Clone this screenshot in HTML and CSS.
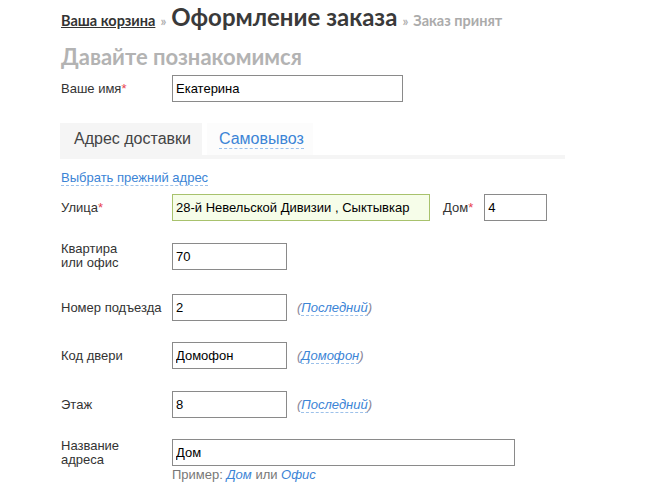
FILE: index.html
```html
<!DOCTYPE html>
<html lang="ru">
<head>
<meta charset="utf-8">
<title>Оформление заказа</title>
<link rel="stylesheet" href="styles.css">
</head>
<body>
<div class="page">
  <div class="crumbs">
    <a class="crumb-link" href="#">Ваша корзина</a>
    <span class="sep">»</span>
    <h1 class="title">Оформление заказа</h1>
    <span class="sep">»</span>
    <span class="crumb-next">Заказ принят</span>
  </div>

  <h2 class="section">Давайте познакомимся</h2>

  <div class="row row-name">
    <label class="label">Ваше имя<span class="req">*</span></label>
    <input class="field w-name" type="text" value="Екатерина">
  </div>

  <div class="tabs">
    <div class="tab tab-active">Адрес доставки</div>
    <div class="tab tab-other"><span class="dash-link">Самовывоз</span></div>
  </div>

  <div class="prev"><span class="dash-link">Выбрать прежний адрес</span></div>

  <div class="rows">
    <div class="row">
      <label class="label">Улица<span class="req">*</span></label>
      <input class="field field-ok w-street" type="text" value="28-й Невельской Дивизии , Сыктывкар">
      <label class="label-inline">Дом<span class="req">*</span></label>
      <input class="field w-house" type="text" value="4">
    </div>
    <div class="row row-flat">
      <label class="label label-two">Квартира<br>или офис</label>
      <input class="field w-small" type="text" value="70">
    </div>
    <div class="row">
      <label class="label">Номер подъезда</label>
      <input class="field w-small" type="text" value="2">
      <span class="hint">(<span class="dash-link">Последний</span>)</span>
    </div>
    <div class="row row-door">
      <label class="label">Код двери</label>
      <input class="field w-small" type="text" value="Домофон">
      <span class="hint">(<span class="dash-link">Домофон</span>)</span>
    </div>
    <div class="row">
      <label class="label">Этаж</label>
      <input class="field w-small" type="text" value="8">
      <span class="hint">(<span class="dash-link">Последний</span>)</span>
    </div>
    <div class="row row-top">
      <label class="label label-two">Название<br>адреса</label>
      <div class="field-col">
        <input class="field w-wide" type="text" value="Дом">
        <div class="example">Пример: <span class="dash-link ex-link">Дом</span> или <span class="dash-link ex-link">Офис</span></div>
      </div>
    </div>
  </div>
</div>
</body>
</html>
```

FILE: styles.css
```css
html, body {
  margin: 0;
  padding: 0;
  background: #ffffff;
}

body {
  font-family: "Liberation Sans", Arial, sans-serif;
  font-size: 13px;
  color: #333333;
}

.page {
  padding: 2px 0 0 60px;
}

.crumbs {
  display: flex;
  align-items: baseline;
  gap: 5px;
  height: 30px;
  font-family: Lato, "Open Sans", sans-serif;
  font-weight: 700;
}

.crumb-link {
  color: #333333;
  font-size: 14.5px;
  text-decoration: underline;
  padding-left: 1px;
}

.sep {
  color: #b0b0b0;
  font-size: 13px;
}

.title {
  margin: 0;
  font-size: 24px;
  line-height: 30px;
  color: #3a3a3a;
  font-weight: 700;
}

.crumb-next {
  color: #ababab;
  font-size: 14.5px;
}

.section {
  margin: 10px 0 0 1px;
  font-family: Lato, "Open Sans", sans-serif;
  font-size: 22px;
  line-height: 30px;
  font-weight: 700;
  color: #b3b3b3;
}

.row {
  display: flex;
  align-items: center;
}

.row-name {
  margin-top: 3px;
}

.row-flat {
  margin-bottom: 3px;
}

.row-door {
  margin-bottom: 1px;
}

.row-top {
  align-items: flex-start;
}

.label {
  width: 112px;
  flex: none;
  line-height: 15px;
  padding-left: 1px;
  box-sizing: border-box;
}

.label-two {
  line-height: 14px;
}

.req {
  color: #e8414f;
}

.field {
  box-sizing: border-box;
  height: 27px;
  border: 1px solid #8a8a8a;
  padding: 0 3px;
  margin: 0;
  font-family: "Liberation Sans", Arial, sans-serif;
  font-size: 13px;
  color: #000000;
  background: #ffffff;
  outline: none;
  border-radius: 0;
}

.field-ok {
  border-color: #a8c26d;
  background: #f6fde9;
}

.w-name { width: 231px; }
.w-street { width: 258px; }
.w-house { width: 63px; }
.w-small { width: 115px; }
.w-wide { width: 343px; }

.label-inline {
  margin: 0 11px 0 13px;
}

.tabs {
  display: flex;
  gap: 5px;
  width: 505px;
  margin-top: 21px;
  border-bottom: 4px solid #f5f5f5;
}

.tab {
  height: 32px;
  display: flex;
  align-items: center;
  font-size: 16px;
  white-space: nowrap;
}

.tab-active {
  background: #f5f5f5;
  color: #444444;
  padding: 0 11px 0 14px;
}

.tab-other {
  background: #fcfcfc;
  padding: 0 9px 0 12px;
}

.dash-link {
  color: #3b84d6;
  border-bottom: 1px dashed #9cc1ea;
}

.tab-other .dash-link {
  line-height: 19px;
}

.prev {
  margin: 10px 0 0 1px;
  line-height: 17px;
}

.rows {
  display: flex;
  flex-direction: column;
  gap: 21px;
  margin-top: 8px;
}

.hint {
  margin-left: 10px;
  font-style: italic;
  color: #8b8699;
}

.field-col {
  display: flex;
  flex-direction: column;
}

.example {
  margin-top: 1px;
  color: #777777;
  line-height: 15px;
}

.ex-link {
  font-style: italic;
}
```
